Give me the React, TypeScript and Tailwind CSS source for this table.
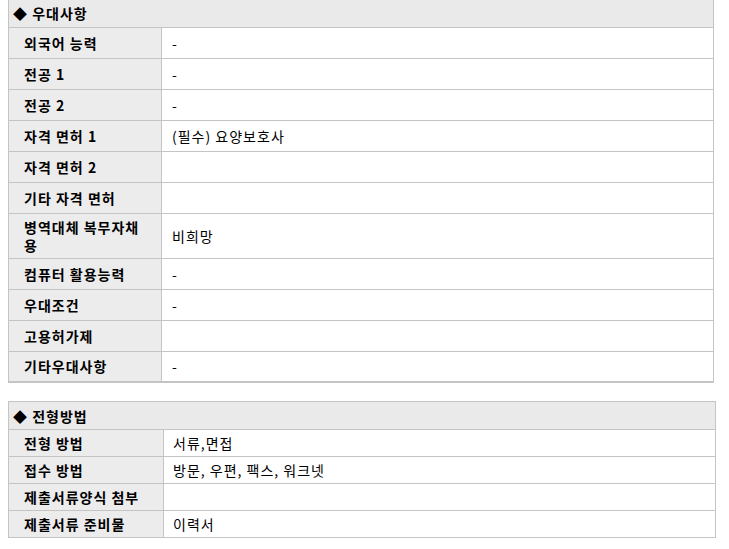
const font = { fontFamily: '"Noto Sans CJK KR", "Noto Sans", sans-serif' };

const prefer: [string, string][] = [
  ["외국어 능력", "-"],
  ["전공 1", "-"],
  ["전공 2", "-"],
  ["자격 면허 1", "(필수) 요양보호사"],
  ["자격 면허 2", ""],
  ["기타 자격 면허", ""],
  ["병역대체 복무자채용", "비희망"],
  ["컴퓨터 활용능력", "-"],
  ["우대조건", "-"],
  ["고용허가제", ""],
  ["기타우대사항", "-"],
];

const process: [string, string][] = [
  ["전형 방법", "서류,면접"],
  ["접수 방법", "방문, 우편, 팩스, 워크넷"],
  ["제출서류양식 첨부", ""],
  ["제출서류 준비물", "이력서"],
];

const App = () => {
  return (
    <div
      className="bg-white min-h-[549px] text-[14px] leading-[18px] tracking-[1px] text-black"
      style={font}
    >
      <table className="ml-2 w-[706px] border-collapse border-b-2 border-[#c4c4c4] table-fixed">
        <colgroup>
          <col className="w-[153px]" />
          <col />
        </colgroup>
        <thead>
          <tr>
            <th
              colSpan={2}
              className="h-[27px] bg-[#eaeaea] border border-t-0 border-[#c4c4c4] text-left font-bold pl-[4px] pb-[1px]"
            >
              ◆ 우대사항
            </th>
          </tr>
        </thead>
        <tbody>
          {prefer.map(([label, value], i) => (
            <tr key={i}>
              <td className="bg-[#ececec] border border-[#c4c4c4] font-bold pl-[15px] pr-[10px] py-[4px] h-[31px] align-middle">
                {label}
              </td>
              <td className="border border-[#c4c4c4] pl-[10px] py-[4px] align-middle">{value}</td>
            </tr>
          ))}
        </tbody>
      </table>

      <table className="ml-2 mt-[18px] w-[708px] border-collapse table-fixed">
        <colgroup>
          <col className="w-[155px]" />
          <col />
        </colgroup>
        <thead>
          <tr>
            <th
              colSpan={2}
              className="h-[28px] bg-[#eaeaea] border border-[#c4c4c4] text-left font-bold pl-[4px]"
            >
              ◆ 전형방법
            </th>
          </tr>
        </thead>
        <tbody>
          {process.map(([label, value], i) => (
            <tr key={i}>
              <td className="bg-[#ececec] border border-[#c4c4c4] font-bold pl-[15px] pr-[10px] h-[27px] align-middle">
                {label}
              </td>
              <td className="border border-[#c4c4c4] pl-[9px] align-middle">{value}</td>
            </tr>
          ))}
        </tbody>
      </table>
    </div>
  );
};

export default App;
